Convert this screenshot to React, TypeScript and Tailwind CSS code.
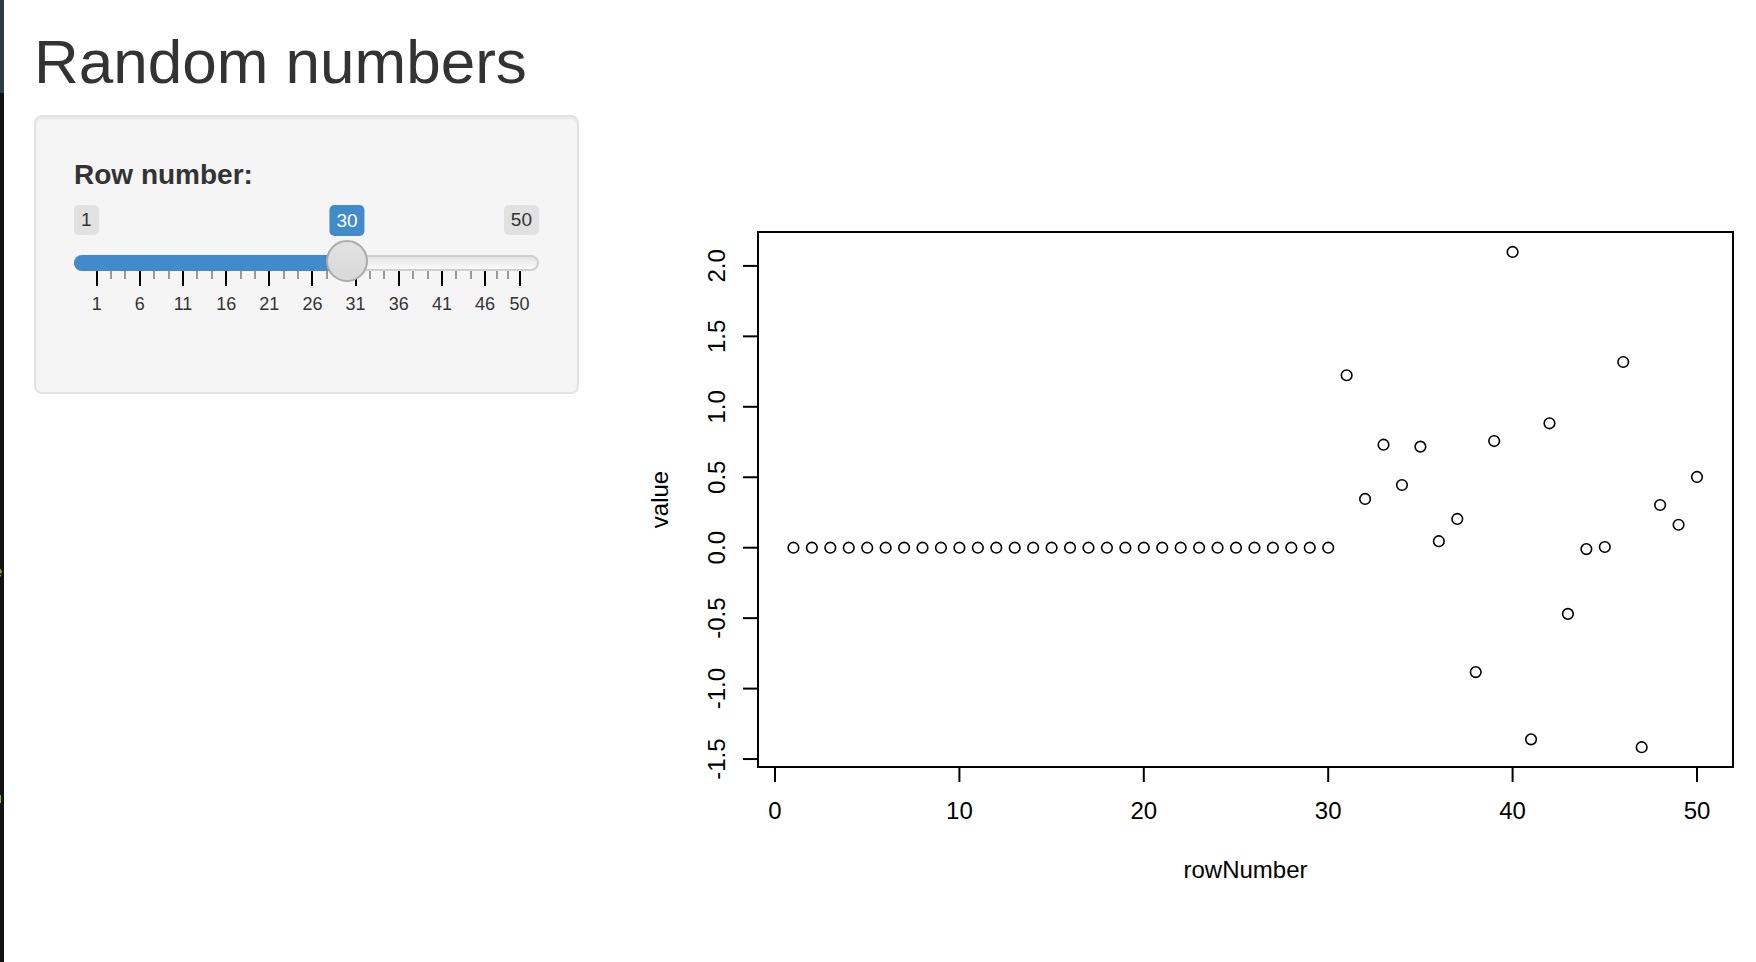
import React from "react";

// Slider settings
const MIN = 1;
const MAX = 50;
const VALUE = 30;
const GRID_LEFT = 22.7; // px from slider edge to the first grid tick
const GRID_STEP = 8.63; // px per unit
const gx = (v: number) => GRID_LEFT + (v - MIN) * GRID_STEP;

const MAJORS = [1, 6, 11, 16, 21, 26, 31, 36, 41, 46, 50];
const MINORS: number[] = MAJORS.slice(0, -1).flatMap((a, i) => {
  const b = MAJORS[i + 1];
  return [a + (b - a) / 3, a + (2 * (b - a)) / 3];
});

// Plot data: first 30 rows are zero, the rest random normals
const VALUES: number[] = [
  ...Array(30).fill(0),
  1.224, 0.346, 0.731, 0.445, 0.717, 0.046, 0.204, -0.883, 0.757, 2.099,
  -1.36, 0.883, -0.47, -0.01, 0.005, 1.318, -1.416, 0.303, 0.163, 0.502,
];

const px = (v: number) => 775 + v * 18.44;
const py = (v: number) => 547.7 - v * 140.9;

function RangeSlider() {
  const handleX = gx(VALUE);
  return (
    <div className="relative h-[119px] w-full mb-[30px]">
      {/* min / max labels */}
      <div className="flex justify-between">
        <span className="h-[30px] px-[7px] rounded-[5px] bg-[#e1e1e1] text-[#333] text-[19px] leading-[30px]">
          {MIN}
        </span>
        <span className="h-[30px] px-[7px] rounded-[5px] bg-[#e1e1e1] text-[#333] text-[19px] leading-[30px]">
          {MAX}
        </span>
      </div>

      {/* current value */}
      <span
        className="absolute top-0 -translate-x-1/2 h-[31px] px-[7px] rounded-[5px] bg-[#428bca] text-white text-[19px] leading-[31px]"
        style={{ left: handleX }}
      >
        {VALUE}
      </span>

      {/* track */}
      <div className="absolute left-0 right-0 top-[50px] h-[16px] rounded-full border-2 border-[#cfcfcf] bg-gradient-to-b from-[#e4e4e4] to-[#fbfbfb]" />
      <div
        className="absolute left-0 top-[50px] h-[16px] rounded-l-full bg-[#428bca]"
        style={{ width: handleX }}
      />

      {/* grid */}
      {MINORS.map((v) => (
        <span
          key={`m${v}`}
          className="absolute top-[66px] h-[8px] w-[2px] -ml-[1px] bg-[#9a9a9a]"
          style={{ left: gx(v) }}
        />
      ))}
      {MAJORS.map((v) => (
        <span
          key={`M${v}`}
          className="absolute top-[66px] h-[15px] w-[2px] -ml-[1px] bg-black"
          style={{ left: gx(v) }}
        />
      ))}
      {MAJORS.map((v) => (
        <span
          key={`t${v}`}
          className="absolute top-[89px] -translate-x-1/2 text-[18px] leading-[20px] text-[#333]"
          style={{ left: gx(v) }}
        >
          {v}
        </span>
      ))}

      {/* handle */}
      <span
        className="absolute top-[35px] h-[42px] w-[42px] -ml-[21px] rounded-full border-2 border-[#ababab] bg-gradient-to-b from-[#e2e2e2] to-[#d9d9d9]"
        style={{ left: handleX }}
      />
    </div>
  );
}

function ScatterPlot() {
  const xTicks = [0, 10, 20, 30, 40, 50];
  const yTicks = [-1.5, -1, -0.5, 0, 0.5, 1, 1.5, 2];
  return (
    <svg
      width={1117}
      height={800}
      viewBox="639 115 1117 800"
      className="block shrink-0"
      fontFamily="'Liberation Sans', Arial, sans-serif"
      fill="#000"
    >
      <rect x={758} y={232} width={975} height={535} fill="none" stroke="#000" strokeWidth={2} />

      {/* x axis */}
      <line x1={px(0)} x2={px(50)} y1={767} y2={767} stroke="#000" strokeWidth={2} />
      {xTicks.map((t) => (
        <g key={t}>
          <line x1={px(t)} x2={px(t)} y1={767} y2={782} stroke="#000" strokeWidth={2} />
          <text x={px(t)} y={819} textAnchor="middle" fontSize={24}>
            {t}
          </text>
        </g>
      ))}
      <text x={1245.5} y={878} textAnchor="middle" fontSize={24}>
        rowNumber
      </text>

      {/* y axis */}
      <line x1={758} x2={758} y1={py(2)} y2={py(-1.5)} stroke="#000" strokeWidth={2} />
      {yTicks.map((t) => (
        <g key={t}>
          <line x1={743} x2={758} y1={py(t)} y2={py(t)} stroke="#000" strokeWidth={2} />
          <text
            x={725}
            y={py(t)}
            textAnchor="middle"
            fontSize={24}
            transform={`rotate(-90 725 ${py(t)})`}
          >
            {t.toFixed(1)}
          </text>
        </g>
      ))}
      <text x={668} y={499.5} textAnchor="middle" fontSize={24} transform="rotate(-90 668 499.5)">
        value
      </text>

      {/* points */}
      {VALUES.map((v, i) => (
        <circle
          key={i}
          cx={px(i + 1)}
          cy={py(v)}
          r={5.3}
          fill="none"
          stroke="#000"
          strokeWidth={1.6}
        />
      ))}
    </svg>
  );
}

export default function App() {
  return (
    <div className="flex w-[1756px] h-[962px] overflow-hidden bg-white font-['Liberation_Sans',Arial,sans-serif] text-[#333]">
      {/* edge of the neighbouring terminal window */}
      <div className="w-[4px] shrink-0 bg-[#111] flex flex-col overflow-hidden">
        <div className="h-[93px] shrink-0 bg-[#2f3a47]" />
        <span className="mt-[472px] -ml-[7px] text-[16px] leading-[16px] text-[#7cc20c] font-['Liberation_Mono',monospace]">
          e
        </span>
        <span className="mt-[214px] -ml-[2px] h-[8px] w-[3px] bg-[#7cc20c]" />
      </div>

      <div className="flex-1 min-w-0 pl-[30px]">
        <h2 className="mt-[29px] mb-[20px] text-[62px] leading-[66px] font-normal text-[#333]">
          Random numbers
        </h2>

        <div className="flex gap-[60px]">
          <div className="w-[545px] shrink-0 self-start rounded-[8px] border-2 border-[#e3e3e3] bg-[#f5f5f5] p-[38px] shadow-[inset_0_2px_2px_rgba(0,0,0,0.05)]">
            <label className="block mb-[10px] text-[28px] leading-[40px] font-bold text-[#333]">
              Row number:
            </label>
            <RangeSlider />
          </div>

          <ScatterPlot />
        </div>
      </div>
    </div>
  );
}
